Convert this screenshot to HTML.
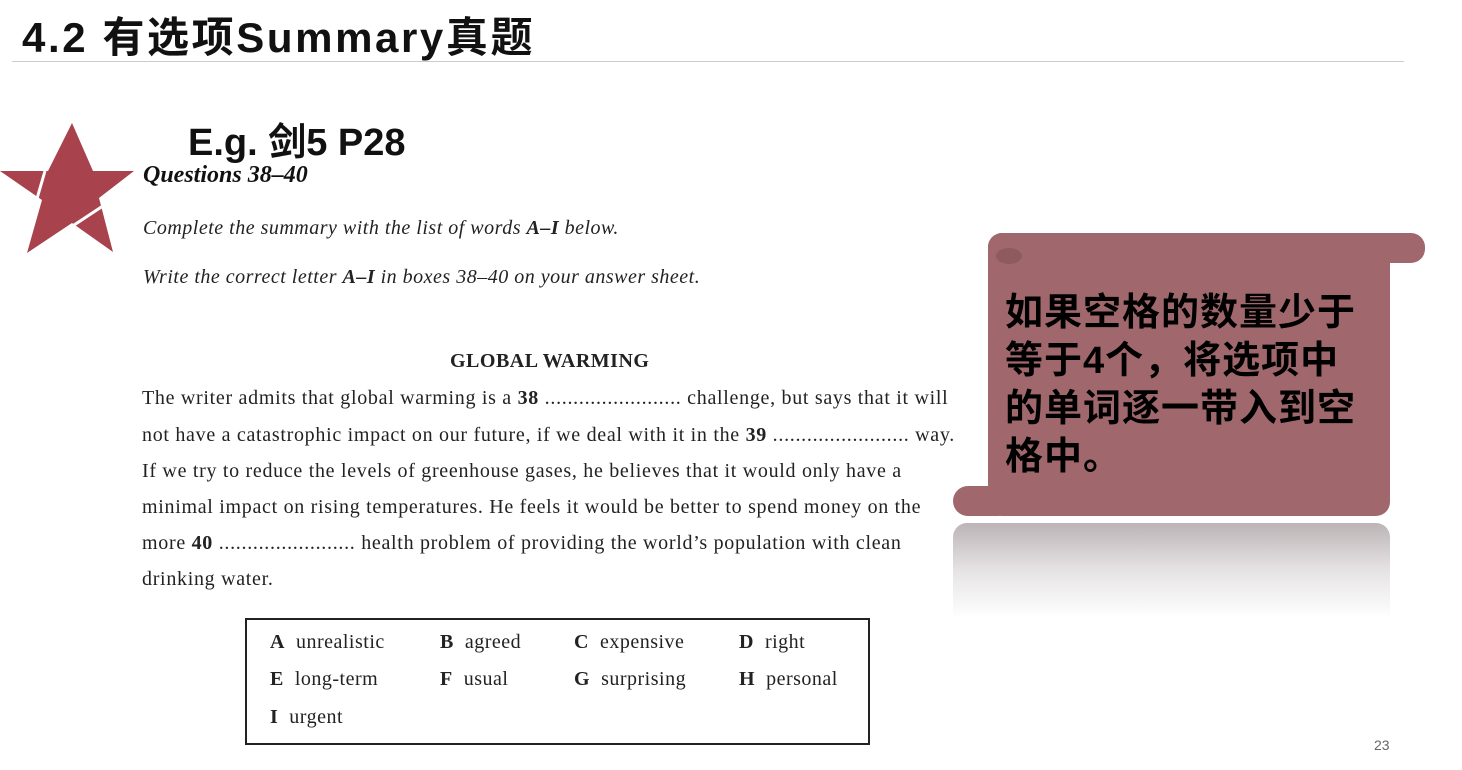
<!DOCTYPE html>
<html><head><meta charset="utf-8"><style>
body{margin:0;width:1462px;height:770px;background:#fff;position:relative;overflow:hidden;font-family:"Liberation Sans","Noto Sans CJK SC",sans-serif}
.a{position:absolute;white-space:nowrap}
.s{font-family:"Liberation Serif","Noto Serif CJK SC",serif;font-size:20px;color:#222;letter-spacing:0.5px}
.it{font-style:italic}
</style></head><body>
<div class="a" style="left:22px;top:4px;font-size:42px;font-weight:bold;color:#111;letter-spacing:2.6px">4.2 有选项Summary真题</div>
<div class="a" style="left:12px;top:61px;width:1392px;height:1px;background:#ccc"></div>
<svg class="a" style="left:0;top:118px" width="140" height="140">
<polygon points="72,5 93,53 134,53 99,80 113,134 72,105 27,135 42,82 0,53 48,53" fill="#a8434d"/>
<line x1="45" y1="53" x2="36" y2="84" stroke="#fff" stroke-width="3"/>
<line x1="62" y1="115" x2="118" y2="78" stroke="#fff" stroke-width="3"/>
</svg>
<div class="a" style="left:188px;top:111px;font-size:38px;font-weight:bold;color:#111">E.g. 剑5 P28</div>
<div class="a s it" style="left:143px;top:162px;font-size:24px;font-weight:bold;color:#111;letter-spacing:0">Questions 38–40</div>
<div class="a s it" style="left:143px;top:217px">Complete the summary with the list of words <b>A–I</b> below.</div>
<div class="a s it" style="left:143px;top:266px">Write the correct letter <b>A–I</b> in boxes 38–40 on your answer sheet.</div>
<div class="a s" style="left:450px;top:350px;font-weight:bold">GLOBAL WARMING</div>
<div class="a s" style="left:142px;top:387px;letter-spacing:0.7px">The writer admits that global warming is a <b>38</b> ........................ challenge, but says that it will</div>
<div class="a s" style="left:142px;top:424px;letter-spacing:0.7px">not have a catastrophic impact on our future, if we deal with it in the <b>39</b> ........................ way.</div>
<div class="a s" style="left:142px;top:460px;letter-spacing:0.7px">If we try to reduce the levels of greenhouse gases, he believes that it would only have a</div>
<div class="a s" style="left:142px;top:496px;letter-spacing:0.7px">minimal impact on rising temperatures. He feels it would be better to spend money on the</div>
<div class="a s" style="left:142px;top:532px;letter-spacing:0.7px">more <b>40</b> ........................ health problem of providing the world’s population with clean</div>
<div class="a s" style="left:142px;top:568px;letter-spacing:0.7px">drinking water.</div>
<div class="a" style="left:245px;top:618px;width:621px;height:123px;border:2px solid #222"></div>
<div class="a s" style="left:270px;top:631px"><b>A</b>&nbsp; unrealistic</div>
<div class="a s" style="left:440px;top:631px"><b>B</b>&nbsp; agreed</div>
<div class="a s" style="left:574px;top:631px"><b>C</b>&nbsp; expensive</div>
<div class="a s" style="left:739px;top:631px"><b>D</b>&nbsp; right</div>
<div class="a s" style="left:270px;top:668px"><b>E</b>&nbsp; long-term</div>
<div class="a s" style="left:440px;top:668px"><b>F</b>&nbsp; usual</div>
<div class="a s" style="left:574px;top:668px"><b>G</b>&nbsp; surprising</div>
<div class="a s" style="left:739px;top:668px"><b>H</b>&nbsp; personal</div>
<div class="a s" style="left:270px;top:706px"><b>I</b>&nbsp; urgent</div>
<!-- scroll -->
<div class="a" style="left:953px;top:523px;width:437px;height:95px;background:linear-gradient(#bcb4b6,#e6e3e4 50%,#fff);border-radius:14px 14px 0 0"></div>
<div class="a" style="left:988px;top:233px;width:437px;height:30px;background:#a0686c;border-radius:14px"></div>
<div class="a" style="left:988px;top:233px;width:402px;height:283px;background:#a0686c;border-radius:14px"></div>
<div class="a" style="left:953px;top:486px;width:60px;height:30px;background:#a0686c;border-radius:15px"></div>
<div class="a" style="left:996px;top:248px;width:26px;height:16px;background:#8e5a5f;border-radius:50%"></div>
<div class="a" style="left:1005px;top:289px;font-size:38px;font-weight:bold;line-height:48px;color:#000;letter-spacing:1px">如果空格的数量少于<br>等于4个，将选项中<br>的单词逐一带入到空<br>格中。</div>
<div class="a" style="left:1374px;top:737px;font-size:14px;color:#666">23</div>
</body></html>
